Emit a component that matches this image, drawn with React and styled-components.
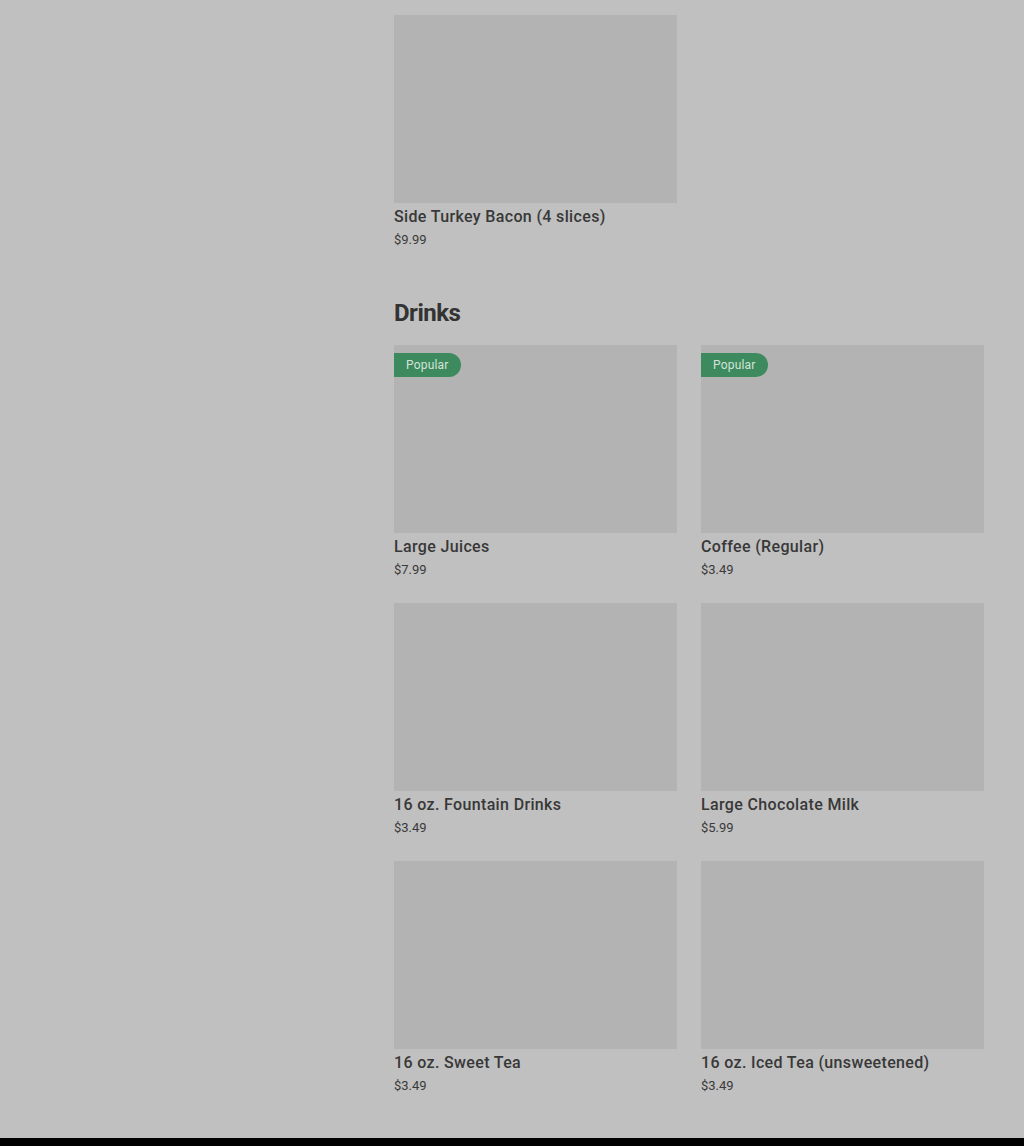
import React from 'react'
import styled, { createGlobalStyle } from 'styled-components'

const GlobalStyle = createGlobalStyle`
    body {
        margin: 0;
        background: #c0c0c0;
        font-family: Roboto, "Liberation Sans", sans-serif;
        color: #333;
    }
`

const Page = styled.div`
    display: grid;
    grid-template-columns: 394px 1fr;
    min-height: 1138px;
`

const Sidebar = styled.aside``

const Content = styled.main`
    padding: 15px 40px 43px 0;
    display: flex;
    flex-direction: column;
    gap: 50px;
`

const Section = styled.section`
    display: flex;
    flex-direction: column;
`

const Heading = styled.h2`
    margin: 0 0 18px;
    font-size: 24px;
    line-height: 28px;
    font-weight: 700;
    letter-spacing: -0.5px;
    color: #333;
`

const Grid = styled.div`
    display: grid;
    grid-template-columns: repeat(2, 283px);
    column-gap: 24px;
    row-gap: 24px;
`

const Card = styled.div`
    display: flex;
    flex-direction: column;
`

const Image = styled.div`
    position: relative;
    height: 188px;
    background: #b3b3b3;
`

const Badge = styled.span`
    position: absolute;
    top: 8px;
    left: 0;
    height: 24px;
    padding: 0 12px;
    display: flex;
    align-items: center;
    background: #3e8a5f;
    color: #d3e3d9;
    font-size: 12px;
    letter-spacing: 0.2px;
    border-radius: 0 12px 12px 0;
`

const Name = styled.div`
    margin-top: 4px;
    font-size: 16px;
    line-height: 20px;
    font-weight: 500;
    letter-spacing: 0.35px;
    color: #383838;
`

const Price = styled.div`
    margin-top: 4px;
    font-size: 13px;
    line-height: 18px;
    color: #3a3a3a;
`

const Footer = styled.footer`
    height: 8px;
    background: #000;
`

const sides = [{ name: 'Side Turkey Bacon (4 slices)', price: '$9.99' }]

const drinks = [
    { name: 'Large Juices', price: '$7.99', popular: true },
    { name: 'Coffee (Regular)', price: '$3.49', popular: true },
    { name: '16 oz. Fountain Drinks', price: '$3.49' },
    { name: 'Large Chocolate Milk', price: '$5.99' },
    { name: '16 oz. Sweet Tea', price: '$3.49' },
    { name: '16 oz. Iced Tea (unsweetened)', price: '$3.49' },
]

const Item = ({ name, price, popular }) => (
    <Card>
        <Image>{popular && <Badge>Popular</Badge>}</Image>
        <Name>{name}</Name>
        <Price>{price}</Price>
    </Card>
)

export default () => (
    <>
        <GlobalStyle />
        <Page>
            <Sidebar />
            <Content>
                <Section>
                    <Grid>
                        {sides.map(i => (
                            <Item key={i.name} {...i} />
                        ))}
                    </Grid>
                </Section>
                <Section>
                    <Heading>Drinks</Heading>
                    <Grid>
                        {drinks.map(i => (
                            <Item key={i.name} {...i} />
                        ))}
                    </Grid>
                </Section>
            </Content>
        </Page>
        <Footer />
    </>
)
